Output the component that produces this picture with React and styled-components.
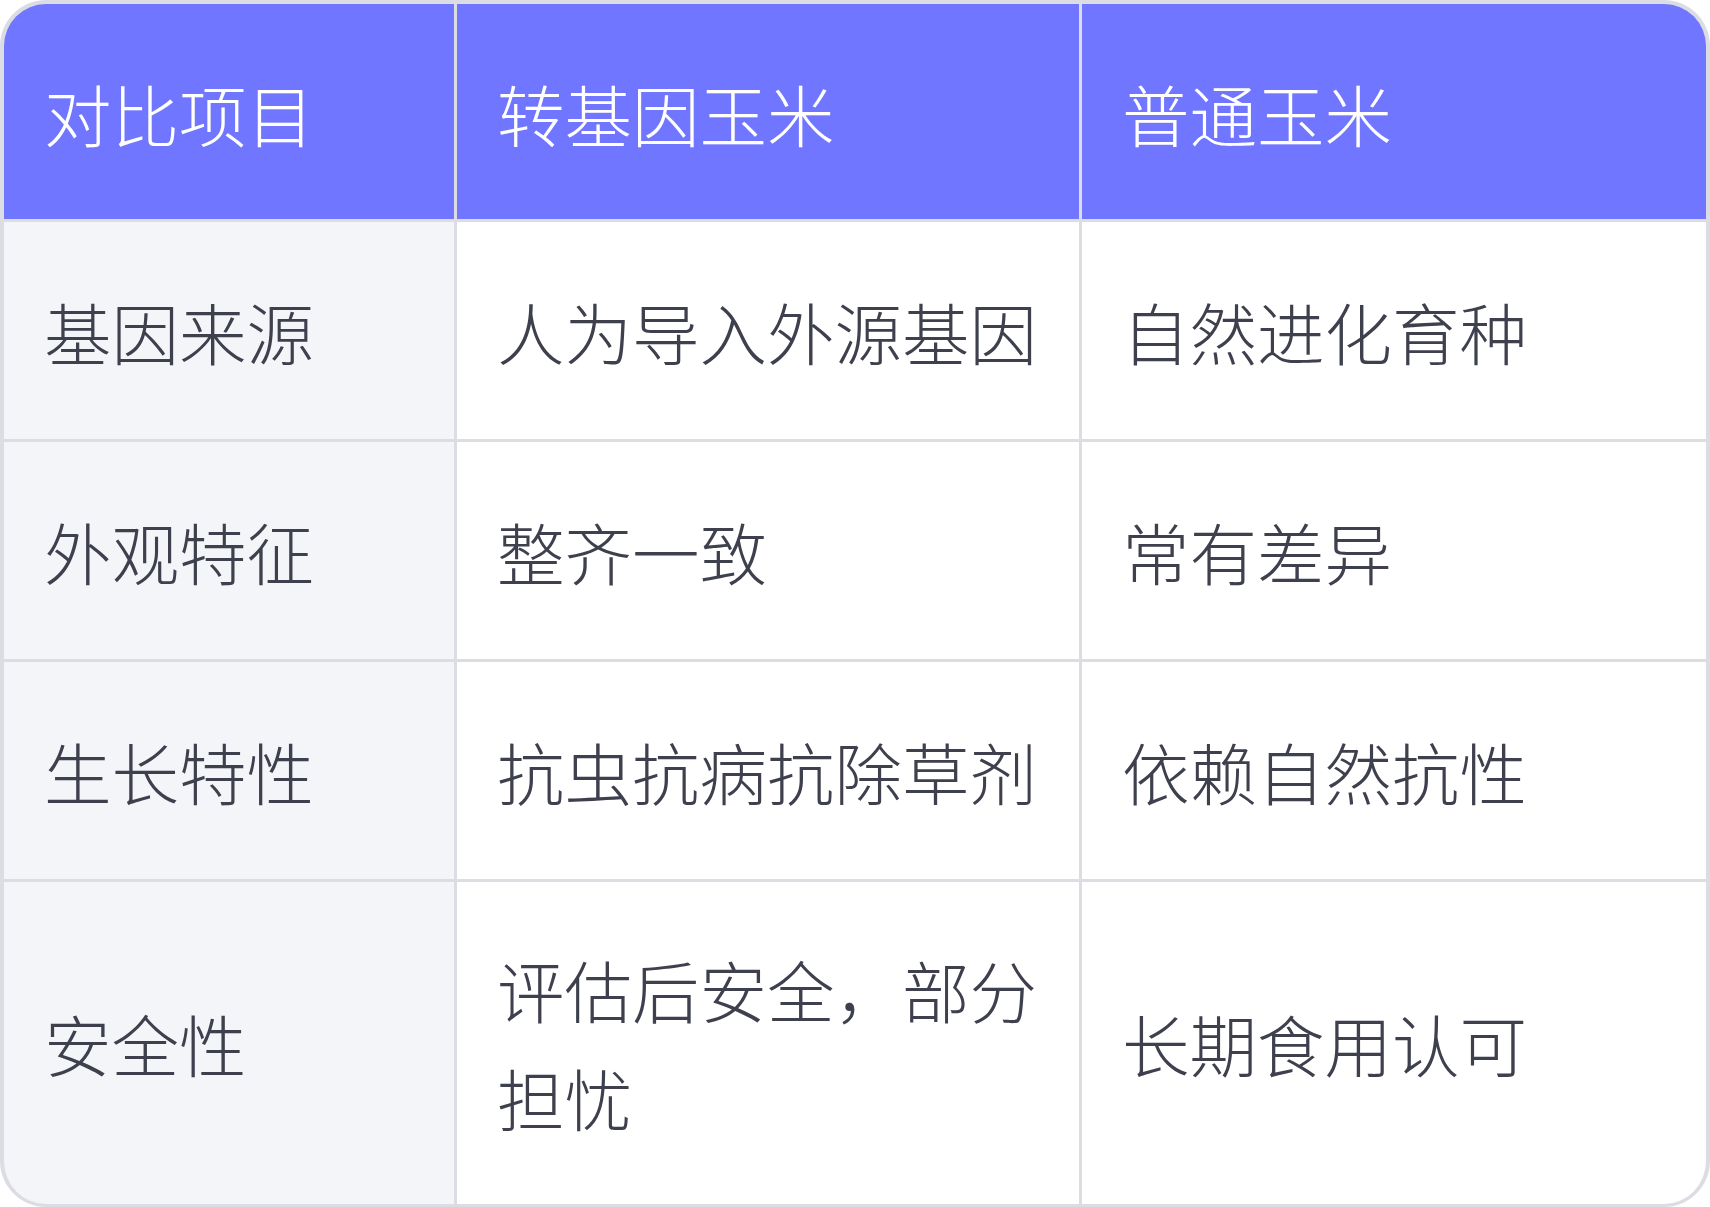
import React from "react";
import styled, { createGlobalStyle } from "styled-components";

const GlobalStyle = createGlobalStyle`
  html, body {
    margin: 0;
    padding: 0;
    background: #ffffff;
  }
  body {
    font-family: "Noto Sans CJK SC", "Noto Sans", sans-serif;
  }
`;

const Table = styled.div`
  box-sizing: border-box;
  width: 1710px;
  height: 1207px;
  border-style: solid;
  border-color: #dcdde3;
  border-width: 4px 4px 3px 4px;
  border-radius: 46px;
  overflow: hidden;
  background: #dcdde3;
  display: grid;
  grid-template-columns: 450px 622px 1fr;
  grid-template-rows: 215px repeat(3, 217px) 1fr;
  gap: 3px;
`;

const Cell = styled.div`
  box-sizing: border-box;
  display: flex;
  align-items: center;
  padding: ${(p) => (p.$head ? "2px 40px 0" : "0 40px")};
  font-size: 67.5px;
  line-height: 108px;
  font-weight: 300;
  color: ${(p) => (p.$head ? "#ffffff" : "#3e404d")};
  background: ${(p) =>
    p.$head ? "#7076ff" : p.$first ? "#f4f5f9" : "#ffffff"};
`;

const Text = styled.span`
  display: block;
`;

const header = ["对比项目", "转基因玉米", "普通玉米"];
const rows = [
  ["基因来源", "人为导入外源基因", "自然进化育种"],
  ["外观特征", "整齐一致", "常有差异"],
  ["生长特性", "抗虫抗病抗除草剂", "依赖自然抗性"],
  ["安全性", "评估后安全，部分担忧", "长期食用认可"],
];

export default function App() {
  return (
    <>
      <GlobalStyle />
      <Table>
        {header.map((h) => (
          <Cell key={h} $head>
            <Text>{h}</Text>
          </Cell>
        ))}
        {rows.map((r) =>
          r.map((c, i) => (
            <Cell key={r[0] + i} $first={i === 0}>
              <Text>{c}</Text>
            </Cell>
          ))
        )}
      </Table>
    </>
  );
}
